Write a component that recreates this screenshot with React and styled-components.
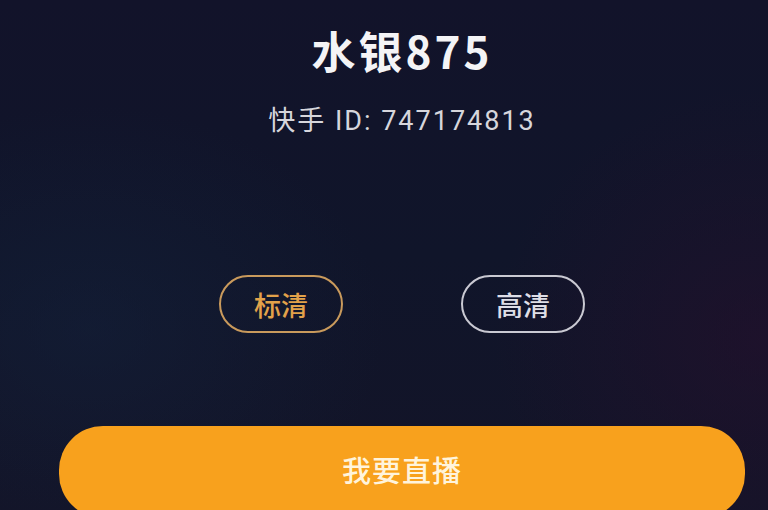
import React from "react";
import styled, { createGlobalStyle } from "styled-components";

const Global = createGlobalStyle`
  html, body { margin: 0; padding: 0; width: 768px; height: 510px; overflow: hidden; }
  body { font-family: "Noto Sans CJK SC", "Noto Sans", sans-serif; }
`;

const Screen = styled.div`
  width: 768px;
  height: 510px;
  overflow: hidden;
  box-sizing: border-box;
  padding-left: 36px;
  background:
    radial-gradient(ellipse 420px 320px at 90px 330px, rgba(20, 34, 60, 0.5), rgba(20, 34, 60, 0) 70%),
    radial-gradient(ellipse 380px 360px at 760px 340px, rgba(36, 16, 44, 0.65), rgba(36, 16, 44, 0) 70%),
    linear-gradient(180deg, #12132a 0%, #10152a 50%, #131428 100%);
  display: flex;
  flex-direction: column;
  align-items: center;
  color: #fff;
`;

const Title = styled.h1`
  margin: 20px 0 0;
  font-size: 44px;
  line-height: 60px;
  font-weight: 700;
  color: #f4f4f6;
  letter-spacing: 3px;
`;

const Subtitle = styled.div`
  margin-top: 25px;
  font-family: "Roboto", "Noto Sans CJK SC", sans-serif;
  font-size: 27px;
  line-height: 32px;
  color: #d6d6dc;
  letter-spacing: 2px;
`;

const Options = styled.div`
  margin-top: 138px;
  display: flex;
  gap: 118px;
`;

const Pill = styled.button`
  width: 124px;
  height: 58px;
  border-radius: 29px;
  background: transparent;
  border: 2.5px solid ${(p) => (p.$active ? "#c99a5c" : "#c9c9d2")};
  color: ${(p) => (p.$active ? "#e2a24a" : "#dedee6")};
  font-family: inherit;
  font-size: 27px;
  font-weight: 500;
  display: flex;
  align-items: center;
  justify-content: center;
  padding: 0;
`;

const Action = styled.button`
  margin-top: 93px;
  width: 686px;
  height: 92px;
  flex-shrink: 0;
  border: none;
  border-radius: 44px;
  background: #f8a11d;
  color: #fff4dc;
  font-family: inherit;
  font-size: 29px;
  font-weight: 500;
  letter-spacing: 1px;
  display: flex;
  align-items: flex-start;
  justify-content: center;
  padding-top: 22px;
  box-sizing: border-box;
`;

export default function App() {
  return (
    <>
      <Global />
      <Screen>
        <Title>水银875</Title>
        <Subtitle>快手 ID: 747174813</Subtitle>
        <Options>
          <Pill $active>标清</Pill>
          <Pill>高清</Pill>
        </Options>
        <Action>我要直播</Action>
      </Screen>
    </>
  );
}
